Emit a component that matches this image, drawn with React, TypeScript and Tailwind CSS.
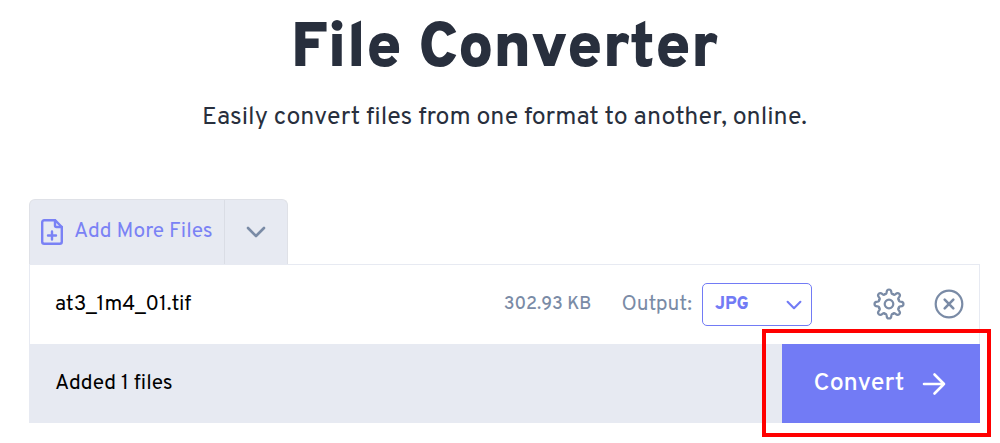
import type { ReactNode } from "react";

const FileAddIcon = () => (
  <svg className="h-[26px] w-[22px]" viewBox="0 0 22 26" fill="none" stroke="currentColor" strokeWidth="2.4" strokeLinecap="round" strokeLinejoin="round" aria-hidden="true">
    <path d="M14 1.200H3.200a2 2 0 0 0-2 2v19.600a2 2 0 0 0 2 2h15.600a2 2 0 0 0 2-2V8z" />
    <path d="M14 1.200v5.300a1.500 1.500 0 0 0 1.500 1.500h5.300" />
    <path d="M11 12.500v8M7 16.500h8" />
  </svg>
);

const ChevronIcon = ({ className }: { className?: string }) => (
  <svg className={className} viewBox="0 0 20 12" fill="none" stroke="currentColor" strokeWidth="2.6" strokeLinecap="round" strokeLinejoin="round" aria-hidden="true">
    <path d="M2 2l8 8 8-8" />
  </svg>
);

const teeth = [0, 45, 90, 135, 180, 225, 270, 315];

// one tooth of the gear, rotated around the middle
const GearIcon = () => (
  <svg className="h-8 w-8" viewBox="-16 -16 32 32" fill="none" stroke="currentColor" strokeWidth="2.2" strokeLinecap="round" strokeLinejoin="round" aria-hidden="true">
    {teeth.map((deg) => (
      <path
        key={deg}
        transform={`rotate(${deg})`}
        d="M-4.100-9.900C-3-9.500-2.500-10.300-2.400-11.600C-2.300-13.500-1.700-14.500 0-14.500S2.300-13.500 2.400-11.600C2.500-10.300 3-9.500 4.100-9.900"
      />
    ))}
    <circle r="4.300" />
  </svg>
);

const CloseIcon = () => (
  <svg className="h-[30px] w-[30px]" viewBox="0 0 30 30" fill="none" stroke="currentColor" strokeWidth="2.2" strokeLinecap="round" aria-hidden="true">
    <circle cx="15" cy="15" r="13.300" />
    <path d="M10.700 10.700l8.600 8.600M19.300 10.700l-8.600 8.600" strokeWidth="2.600" />
  </svg>
);

const ArrowIcon = () => (
  <svg className="h-6 w-6" viewBox="0 0 24 24" fill="none" stroke="currentColor" strokeWidth="2.600" strokeLinecap="round" strokeLinejoin="round" aria-hidden="true">
    <path d="M2 12h20M12.500 2.500L22 12l-9.500 9.500" />
  </svg>
);

const IconButton = ({ label, children }: { label: string; children: ReactNode }) => (
  <button type="button" aria-label={label} className="flex h-8 w-8 items-center justify-center text-[#7a8ba6]">
    {children}
  </button>
);

const App = () => {
  return (
    <main className="bg-white pt-4 pr-5 pb-5 pl-[29px] font-['Overpass','Roboto',sans-serif] text-black">
      <header className="text-center text-[#282f3d]">
        <h1 className="text-[63px] leading-[68px] font-black">File Converter</h1>
        <p className="mt-[18px] text-[25px] leading-8">
          Easily convert files from one format to another, online.
        </p>
      </header>

      <section className="mt-[65px]">
        <div className="flex h-[65px] w-[259px] rounded-t-md border border-b-0 border-[#dfe1e7] bg-[#e7eaf2]">
          <button type="button" className="flex flex-1 items-center gap-[11px] border-r border-[#dadde5] pl-[11px] text-[21px] text-[#7a82f5]">
            <FileAddIcon />
            Add More Files
          </button>
          <button type="button" aria-label="More sources" className="flex w-[62px] items-center justify-center text-[#7a8ba6]">
            <ChevronIcon className="h-3 w-5" />
          </button>
        </div>

        <div className="flex h-20 items-center border border-b-0 border-[#e7eaf2] pr-[14px] pl-[25px]">
          <span className="flex-1 text-[21px]">at3_1m4_01.tif</span>
          <span className="mr-[30px] text-lg font-medium text-[#7a8ba6]">302.93 KB</span>
          <label htmlFor="output" className="mr-[10px] text-[21px] text-[#7a8ba6]">
            Output:
          </label>
          <div className="grid w-[110px] items-center text-[#727bf5]">
            <select id="output" className="col-start-1 row-start-1 h-[43px] appearance-none rounded-[5px] border border-current bg-white pl-3 text-lg font-extrabold">
              <option>JPG</option>
            </select>
            <ChevronIcon className="pointer-events-none col-start-1 row-start-1 mr-[10px] h-[10px] w-4 justify-self-end" />
          </div>
          <div className="ml-[61px] flex gap-7 pb-[2px]">
            <IconButton label="Settings">
              <GearIcon />
            </IconButton>
            <IconButton label="Remove file">
              <CloseIcon />
            </IconButton>
          </div>
        </div>

        <div className="flex h-[79px] items-center bg-[#e7eaf2] pl-[26px]">
          <span className="flex-1 text-[21px]">Added 1 files</span>
          <div className="relative h-full w-[198px]">
            <button type="button" className="flex h-full w-full items-center justify-center gap-[18px] bg-[#727bf5] pr-[2px] text-[25px] font-medium text-white">
              <span className="pt-[2px]">Convert</span>
              <ArrowIcon />
            </button>
            <div className="pointer-events-none absolute -top-[15px] -right-[11px] -bottom-[14px] -left-5 border-4 border-[#ff0000]" />
          </div>
        </div>
      </section>
    </main>
  );
};

export default App;
